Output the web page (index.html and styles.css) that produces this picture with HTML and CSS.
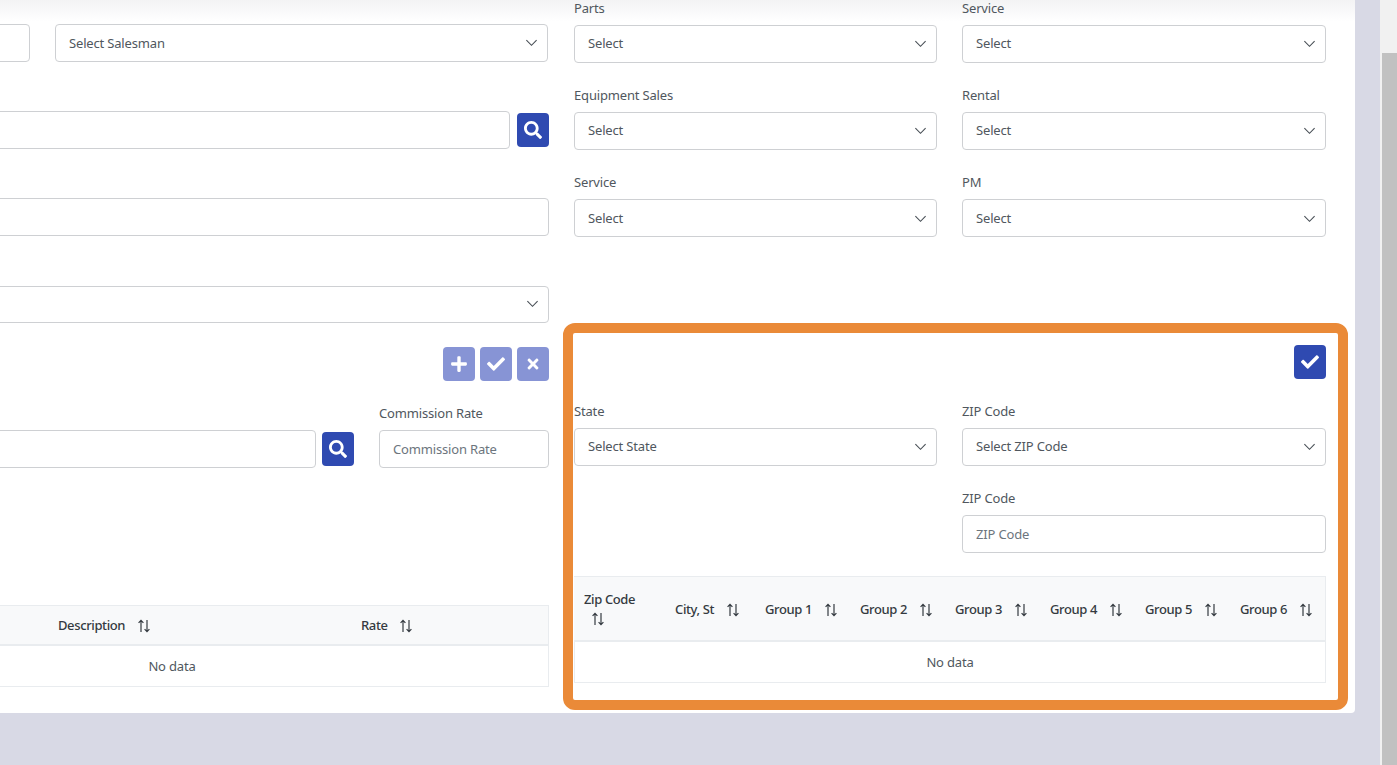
FILE: index.html
```html
<!DOCTYPE html>
<html lang="en">
<head>
<meta charset="utf-8">
<title>Customer setup</title>
<link rel="stylesheet" href="styles.css">
</head>
<body>
<svg class="sprite" aria-hidden="true">
  <symbol id="i-check" viewBox="0 0 512 512"><path d="M173.898 439.404l-166.4-166.4c-9.997-9.997-9.997-26.206 0-36.204l36.203-36.204c9.997-9.998 26.207-9.998 36.204 0L192 312.69 432.095 72.596c9.997-9.997 26.207-9.997 36.204 0l36.203 36.204c9.997 9.997 9.997 26.206 0 36.204l-294.4 294.401c-9.998 9.997-26.207 9.997-36.204-.001z"/></symbol>
  <symbol id="i-search" viewBox="0 0 512 512"><path d="M505 442.7L405.3 343c-4.5-4.5-10.6-7-17-7H372c27.6-35.3 44-79.7 44-128C416 93.1 322.9 0 208 0S0 93.1 0 208s93.1 208 208 208c48.3 0 92.7-16.4 128-44v16.3c0 6.4 2.5 12.5 7 17l99.7 99.7c9.4 9.4 24.6 9.4 33.9 0l28.3-28.3c9.4-9.4 9.4-24.6.1-34zM208 336c-70.7 0-128-57.2-128-128 0-70.7 57.2-128 128-128 70.7 0 128 57.2 128 128 0 70.7-57.2 128-128 128z"/></symbol>
  <symbol id="i-plus" viewBox="0 0 448 512"><path d="M416 208H272V64c0-17.67-14.33-32-32-32h-32c-17.67 0-32 14.33-32 32v144H32c-17.67 0-32 14.33-32 32v32c0 17.67 14.33 32 32 32h144v144c0 17.67 14.33 32 32 32h32c17.67 0 32-14.33 32-32V304h144c17.67 0 32-14.33 32-32v-32c0-17.67-14.33-32-32-32z"/></symbol>
  <symbol id="i-times" viewBox="0 0 352 512"><path d="M242.72 256l100.07-100.07c12.28-12.28 12.28-32.19 0-44.48l-22.24-22.24c-12.28-12.28-32.19-12.28-44.48 0L176 189.28 75.93 89.21c-12.28-12.28-32.19-12.28-44.48 0L9.21 111.45c-12.28 12.28-12.28 32.19 0 44.48L109.28 256 9.21 356.07c-12.28 12.28-12.28 32.19 0 44.48l22.24 22.24c12.28 12.28 32.2 12.28 44.48 0L176 322.72l100.07 100.07c12.28 12.28 32.2 12.28 44.48 0l22.24-22.24c12.28-12.28 12.28-32.19 0-44.48L242.72 256z"/></symbol>
  <symbol id="i-down" viewBox="0 0 14 14"><path d="M1.5 4.5L7 10l5.5-5.5" fill="none" stroke="currentColor" stroke-width="1.2"/></symbol>
  <symbol id="i-sort" viewBox="0 0 14 14"><path d="M4 13V1.6M1.6 3.9L4 1.4l2.4 2.5M10 1v11.4M7.6 10.1l2.4 2.5 2.4-2.5" fill="none" stroke="currentColor" stroke-width="1.2"/></symbol>
</svg>

<div class="viewport">
  <main class="card">
    <div class="col-left">
      <div class="row row-first">
        <input class="input w-235" type="text" aria-label="Customer">
        <div class="select grow"><span>Select Salesman</span><svg class="chev"><use href="#i-down"/></svg></div>
      </div>
      <div class="row row-search">
        <input class="input grow" type="text" aria-label="Address">
        <button class="btn btn-primary" type="button" aria-label="Search"><svg class="ico"><use href="#i-search"/></svg></button>
      </div>
      <div class="row row-plain">
        <input class="input grow" type="text" aria-label="Address 2">
      </div>
      <div class="row row-plain-2">
        <div class="select select-short grow"><span></span><svg class="chev"><use href="#i-down"/></svg></div>
      </div>
      <div class="actions">
        <button class="btn btn-muted" type="button" aria-label="Add"><svg class="ico"><use href="#i-plus"/></svg></button>
        <button class="btn btn-muted" type="button" aria-label="Save"><svg class="ico"><use href="#i-check"/></svg></button>
        <button class="btn btn-muted" type="button" aria-label="Cancel"><svg class="ico ico-sm"><use href="#i-times"/></svg></button>
      </div>
      <div class="row row-commission">
        <input class="input grow" type="text" aria-label="Item">
        <button class="btn btn-primary" type="button" aria-label="Search"><svg class="ico"><use href="#i-search"/></svg></button>
        <div class="field commission">
          <label class="label">Commission Rate</label>
          <input class="input" type="text" placeholder="Commission Rate">
        </div>
      </div>
      <table class="table table-rates">
        <colgroup><col class="c-code"><col class="c-desc"><col class="c-rate"></colgroup>
        <thead>
          <tr>
            <th></th>
            <th><span class="th-in">Description <svg class="sort"><use href="#i-sort"/></svg></span></th>
            <th><span class="th-in">Rate <svg class="sort"><use href="#i-sort"/></svg></span></th>
          </tr>
        </thead>
        <tbody><tr><td colspan="3">No data</td></tr></tbody>
      </table>
    </div>

    <div class="col-right">
      <div class="grid-fields">
        <div class="field"><label class="label">Parts</label><div class="select"><span>Select</span><svg class="chev"><use href="#i-down"/></svg></div></div>
        <div class="field"><label class="label">Service</label><div class="select"><span>Select</span><svg class="chev"><use href="#i-down"/></svg></div></div>
        <div class="field"><label class="label">Equipment Sales</label><div class="select"><span>Select</span><svg class="chev"><use href="#i-down"/></svg></div></div>
        <div class="field"><label class="label">Rental</label><div class="select"><span>Select</span><svg class="chev"><use href="#i-down"/></svg></div></div>
        <div class="field"><label class="label">Service</label><div class="select select-low"><span>Select</span><svg class="chev"><use href="#i-down"/></svg></div></div>
        <div class="field"><label class="label">PM</label><div class="select select-low"><span>Select</span><svg class="chev"><use href="#i-down"/></svg></div></div>
      </div>

      <section class="zone">
        <div class="zone-actions">
          <button class="btn btn-primary" type="button" aria-label="Save"><svg class="ico"><use href="#i-check"/></svg></button>
        </div>
        <div class="grid-fields grid-zone">
          <div class="field"><label class="label">State</label><div class="select"><span>Select State</span><svg class="chev"><use href="#i-down"/></svg></div></div>
          <div class="field"><label class="label">ZIP Code</label><div class="select"><span>Select ZIP Code</span><svg class="chev"><use href="#i-down"/></svg></div></div>
          <div class="field span-2"><label class="label">ZIP Code</label><input class="input" type="text" placeholder="ZIP Code"></div>
        </div>
        <table class="table table-zip">
          <colgroup><col class="z-zip"><col class="z-city"><col class="z-g"><col class="z-g"><col class="z-g"><col class="z-g"><col class="z-g"><col class="z-last"></colgroup>
          <thead>
            <tr>
              <th class="th-stack">Zip Code <svg class="sort sort-wrap"><use href="#i-sort"/></svg></th>
              <th><span class="th-in">City, St <svg class="sort"><use href="#i-sort"/></svg></span></th>
              <th><span class="th-in">Group 1 <svg class="sort"><use href="#i-sort"/></svg></span></th>
              <th><span class="th-in">Group 2 <svg class="sort"><use href="#i-sort"/></svg></span></th>
              <th><span class="th-in">Group 3 <svg class="sort"><use href="#i-sort"/></svg></span></th>
              <th><span class="th-in">Group 4 <svg class="sort"><use href="#i-sort"/></svg></span></th>
              <th><span class="th-in">Group 5 <svg class="sort"><use href="#i-sort"/></svg></span></th>
              <th><span class="th-in">Group 6 <svg class="sort"><use href="#i-sort"/></svg></span></th>
            </tr>
          </thead>
          <tbody><tr><td colspan="8">No data</td></tr></tbody>
        </table>
      </section>
    </div>
  </main>
</div>

<div class="scrollbar"><div class="scroll-thumb"></div></div>
</body>
</html>
```

FILE: styles.css
```css
* { box-sizing: border-box; }

html, body { height: 100%; }

body {
  margin: 0;
  display: flex;
  overflow: hidden;
  background: #d8d9e5;
  color: #50575e;
  font: 13px/18px "Noto Sans", "Open Sans", sans-serif;
  letter-spacing: -0.17px;
}

.sprite { display: none; }

.viewport {
  flex: 1;
  min-width: 0;
  overflow: hidden;
}

.card {
  display: flex;
  gap: 25px;
  width: 1560px;
  height: 733px;
  margin: -20px 0 0 -205px;
  padding-right: 29px;
  background: linear-gradient(#f3f3f4 20px, #fff 42px);
  border-radius: 4px;
}

.col-left {
  display: flex;
  flex-direction: column;
  width: 754px;
  flex: none;
}

.col-right {
  width: 752px;
  flex: none;
}

.row { display: flex; align-items: center; }
.grow { flex: 1; min-width: 0; }
.w-235 { width: 235px; flex: none; }

.row-first { gap: 25px; margin-top: 44px; margin-right: 1px; }
.row-search { gap: 7px; margin-top: 49px; }
.row-plain { margin-top: 49px; }
.row-plain-2 { margin-top: 50px; }

.input, .select {
  height: 38px;
  border: 1px solid #ced0d3;
  border-radius: 4px;
  background: #fff;
  color: inherit;
  font: inherit;
  letter-spacing: inherit;
}

.input {
  display: block;
  width: 100%;
  padding: 0 13px;
  outline: 0;
}

.input.w-235 { width: 235px; }
.input.grow { width: auto; }
.input::placeholder { color: #6c757d; opacity: 1; }

.select {
  display: flex;
  align-items: center;
  justify-content: space-between;
  padding: 0 9px 2px 13px;
}

.row-first .select { padding-bottom: 1px; }
.select-low { padding-bottom: 0; }
.select-short { height: 37px; }

.chev {
  width: 13px;
  height: 13px;
  color: #495057;
  flex: none;
}

.btn {
  display: flex;
  align-items: center;
  justify-content: center;
  width: 32px;
  height: 34px;
  padding: 0;
  border: 0;
  border-radius: 4px;
  color: #fff;
  flex: none;
}

.btn-primary { background: #2f4ab1; }
.btn-muted { background: #8794d5; }

.ico {
  width: 18px;
  height: 18px;
  fill: currentColor;
}

.ico-sm { width: 16px; height: 16px; }

.actions {
  display: flex;
  justify-content: flex-end;
  gap: 5px;
  margin-top: 24px;
}

.row-commission {
  align-items: flex-end;
  margin-top: 23px;
}

.row-commission .btn { margin: 0 25px 2px 6px; }

.field { display: flex; flex-direction: column; }

.label {
  display: block;
  margin-bottom: 8px;
}

.commission { width: 170px; flex: none; }

.grid-fields {
  display: grid;
  grid-template-columns: 363px 364px;
  column-gap: 25px;
  row-gap: 23px;
  margin-top: 19px;
}

.zone {
  width: 785px;
  height: 387px;
  margin: 86px 0 0 -11px;
  padding: 12px 12px 0 1px;
  border: 10px solid #ea8a38;
  border-radius: 12px;
}

.zone-actions {
  display: flex;
  justify-content: flex-end;
}

.grid-zone {
  margin-top: 23px;
  margin-bottom: 23px;
}

.span-2 { grid-column: 2; }

.table {
  width: 100%;
  table-layout: fixed;
  border-collapse: separate;
  border-spacing: 0;
}

.table-rates { margin-top: 137px; }

.c-code { width: 253px; }
.c-desc { width: 303px; }
.c-rate { width: 198px; }

.z-zip { width: 91px; }
.z-city { width: 90px; }
.z-g { width: 95px; }
.z-last { width: 96px; }

.table th {
  padding: 10px;
  background: #f8f9fa;
  border: 1px solid #e9ecef;
  border-width: 1px 0 2px;
  color: #343a40;
  font-weight: 500;
  letter-spacing: -0.38px;
  text-align: left;
}

.table th.th-stack { padding: 9px 10px 11px; }

.table-rates thead th { height: 41px; }
.table-zip thead th { height: 66px; }

.table th:last-child { border-right-width: 1px; }

.table td {
  height: 41px;
  padding: 0;
  text-align: center;
  border: 1px solid #e9ecef;
  border-width: 0 1px 1px;
}

.th-in { white-space: nowrap; }

.sort {
  width: 14px;
  height: 14px;
  margin-left: 8.5px;
  vertical-align: -3px;
  color: #343a40;
}

.table th .sort-wrap { display: block; margin: 4px 0 0 7px; }

.scrollbar {
  width: 17px;
  flex: none;
  padding: 53px 0 0 2px;
  background: #f1f1f1;
}

.scroll-thumb {
  height: 100%;
  background: #c1c1c1;
}
```
